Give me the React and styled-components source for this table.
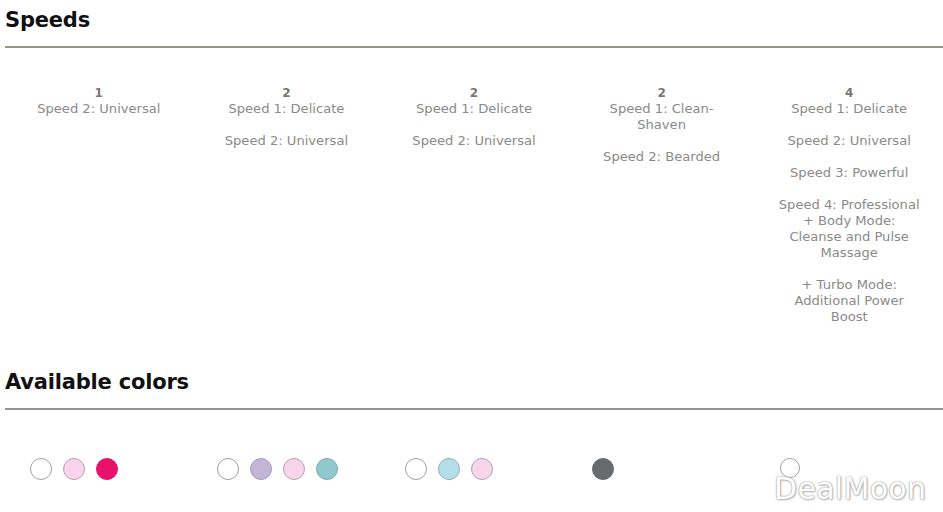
import React from "react";
import styled, { createGlobalStyle } from "styled-components";

const Global = createGlobalStyle`
  html, body { margin: 0; padding: 0; background: #fff; }
  body { font-family: "DejaVu Sans", "Liberation Sans", sans-serif; }
`;

const Page = styled.div`
  position: relative;
  width: 938px;
  height: 512px;
  padding-left: 5px;
  overflow: hidden;
`;

const SectionTitle = styled.h2`
  margin: 0;
  padding-top: ${(p) => p.$top}px;
  padding-bottom: ${(p) => p.$bottom}px;
  font-family: "DejaVu Sans", sans-serif;
  font-weight: bold;
  font-size: 21px;
  line-height: 26px;
  color: #111;
  letter-spacing: -0.2px;
  border-bottom: 2px solid #96958a;
`;

const Grid = styled.div`
  display: grid;
  grid-template-columns: repeat(5, 1fr);
  margin-top: ${(p) => p.$top}px;
  height: ${(p) => p.$height}px;
`;

const SpeedCol = styled.div`
  text-align: center;
  padding: 0 21px;
  color: #8a8a8a;
  font-size: 13.1px;
  line-height: 16px;
`;

const Count = styled.div`
  font-weight: bold;
  color: #777;
  font-size: 12px;
`;

const Item = styled.p`
  margin: 0 0 16px;
`;

const ColorCol = styled.div`
  display: flex;
  align-items: center;
  gap: 11px;
  padding-left: 24.5px;
`;

const Swatch = styled.span`
  display: block;
  box-sizing: border-box;
  width: ${(p) => p.$size || 22}px;
  height: ${(p) => p.$size || 22}px;
  border-radius: 50%;
  background: ${(p) => p.$color};
  border: 1px solid ${(p) => p.$border || "#9a9a9a"};
  margin-top: ${(p) => p.$shift || 0}px;
`;

const Watermark = styled.div`
  position: absolute;
  left: 774px;
  top: 471px;
  font-family: "DejaVu Sans", sans-serif;
  font-size: 30px;
  letter-spacing: 0.3px;
  color: #fff;
  text-shadow: 0 0 1px #999, 0 0 2px #aaa, 1px 1px 2px #bbb;
`;

const speeds = [
  { n: 1, items: ["Speed 2: Universal"] },
  { n: 2, items: ["Speed 1: Delicate", "Speed 2: Universal"] },
  { n: 2, items: ["Speed 1: Delicate", "Speed 2: Universal"] },
  { n: 2, items: ["Speed 1: Clean-Shaven", "Speed 2: Bearded"] },
  {
    n: 4,
    items: [
      "Speed 1: Delicate",
      "Speed 2: Universal",
      "Speed 3: Powerful",
      "Speed 4: Professional + Body Mode: Cleanse and Pulse Massage",
      "+ Turbo Mode: Additional Power Boost",
    ],
  },
];

const W = { c: "#fff", b: "#a0a0a0" };
const colors = [
  [W, { c: "#f8d5ea", b: "#b7a0ae" }, { c: "#e8116b", b: "#e8116b" }],
  [W, { c: "#c3b5d5", b: "#a89db8" }, { c: "#f8d5ea", b: "#b7a0ae" }, { c: "#8fc9cd", b: "#7fa9ad" }],
  [W, { c: "#b4dfe9", b: "#8fb0b8" }, { c: "#f8d5ea", b: "#b7a0ae" }],
  [{ c: "#666b70", b: "#666b70" }],
  [{ c: "#fff", b: "#a0a0a0", s: 20, shift: -2 }],
];

export default function App() {
  return (
    <>
      <Global />
      <Page>
        <SectionTitle $top={7} $bottom={13}>Speeds</SectionTitle>
        <Grid $top={37} $height={275}>
          {speeds.map((s, i) => (
            <SpeedCol key={i}>
              <Count>{s.n}</Count>
              {s.items.map((t, j) => (
                <Item key={j}>{t}</Item>
              ))}
            </SpeedCol>
          ))}
        </Grid>
        <SectionTitle $top={9} $bottom={13}>Available colors</SectionTitle>
        <Grid $top={39} $height={40}>
          {colors.map((group, i) => (
            <ColorCol key={i}>
              {group.map((c, j) => (
                <Swatch key={j} $color={c.c} $border={c.b} $size={c.s} $shift={c.shift} />
              ))}
            </ColorCol>
          ))}
        </Grid>
        <Watermark>DealMoon</Watermark>
      </Page>
    </>
  );
}
